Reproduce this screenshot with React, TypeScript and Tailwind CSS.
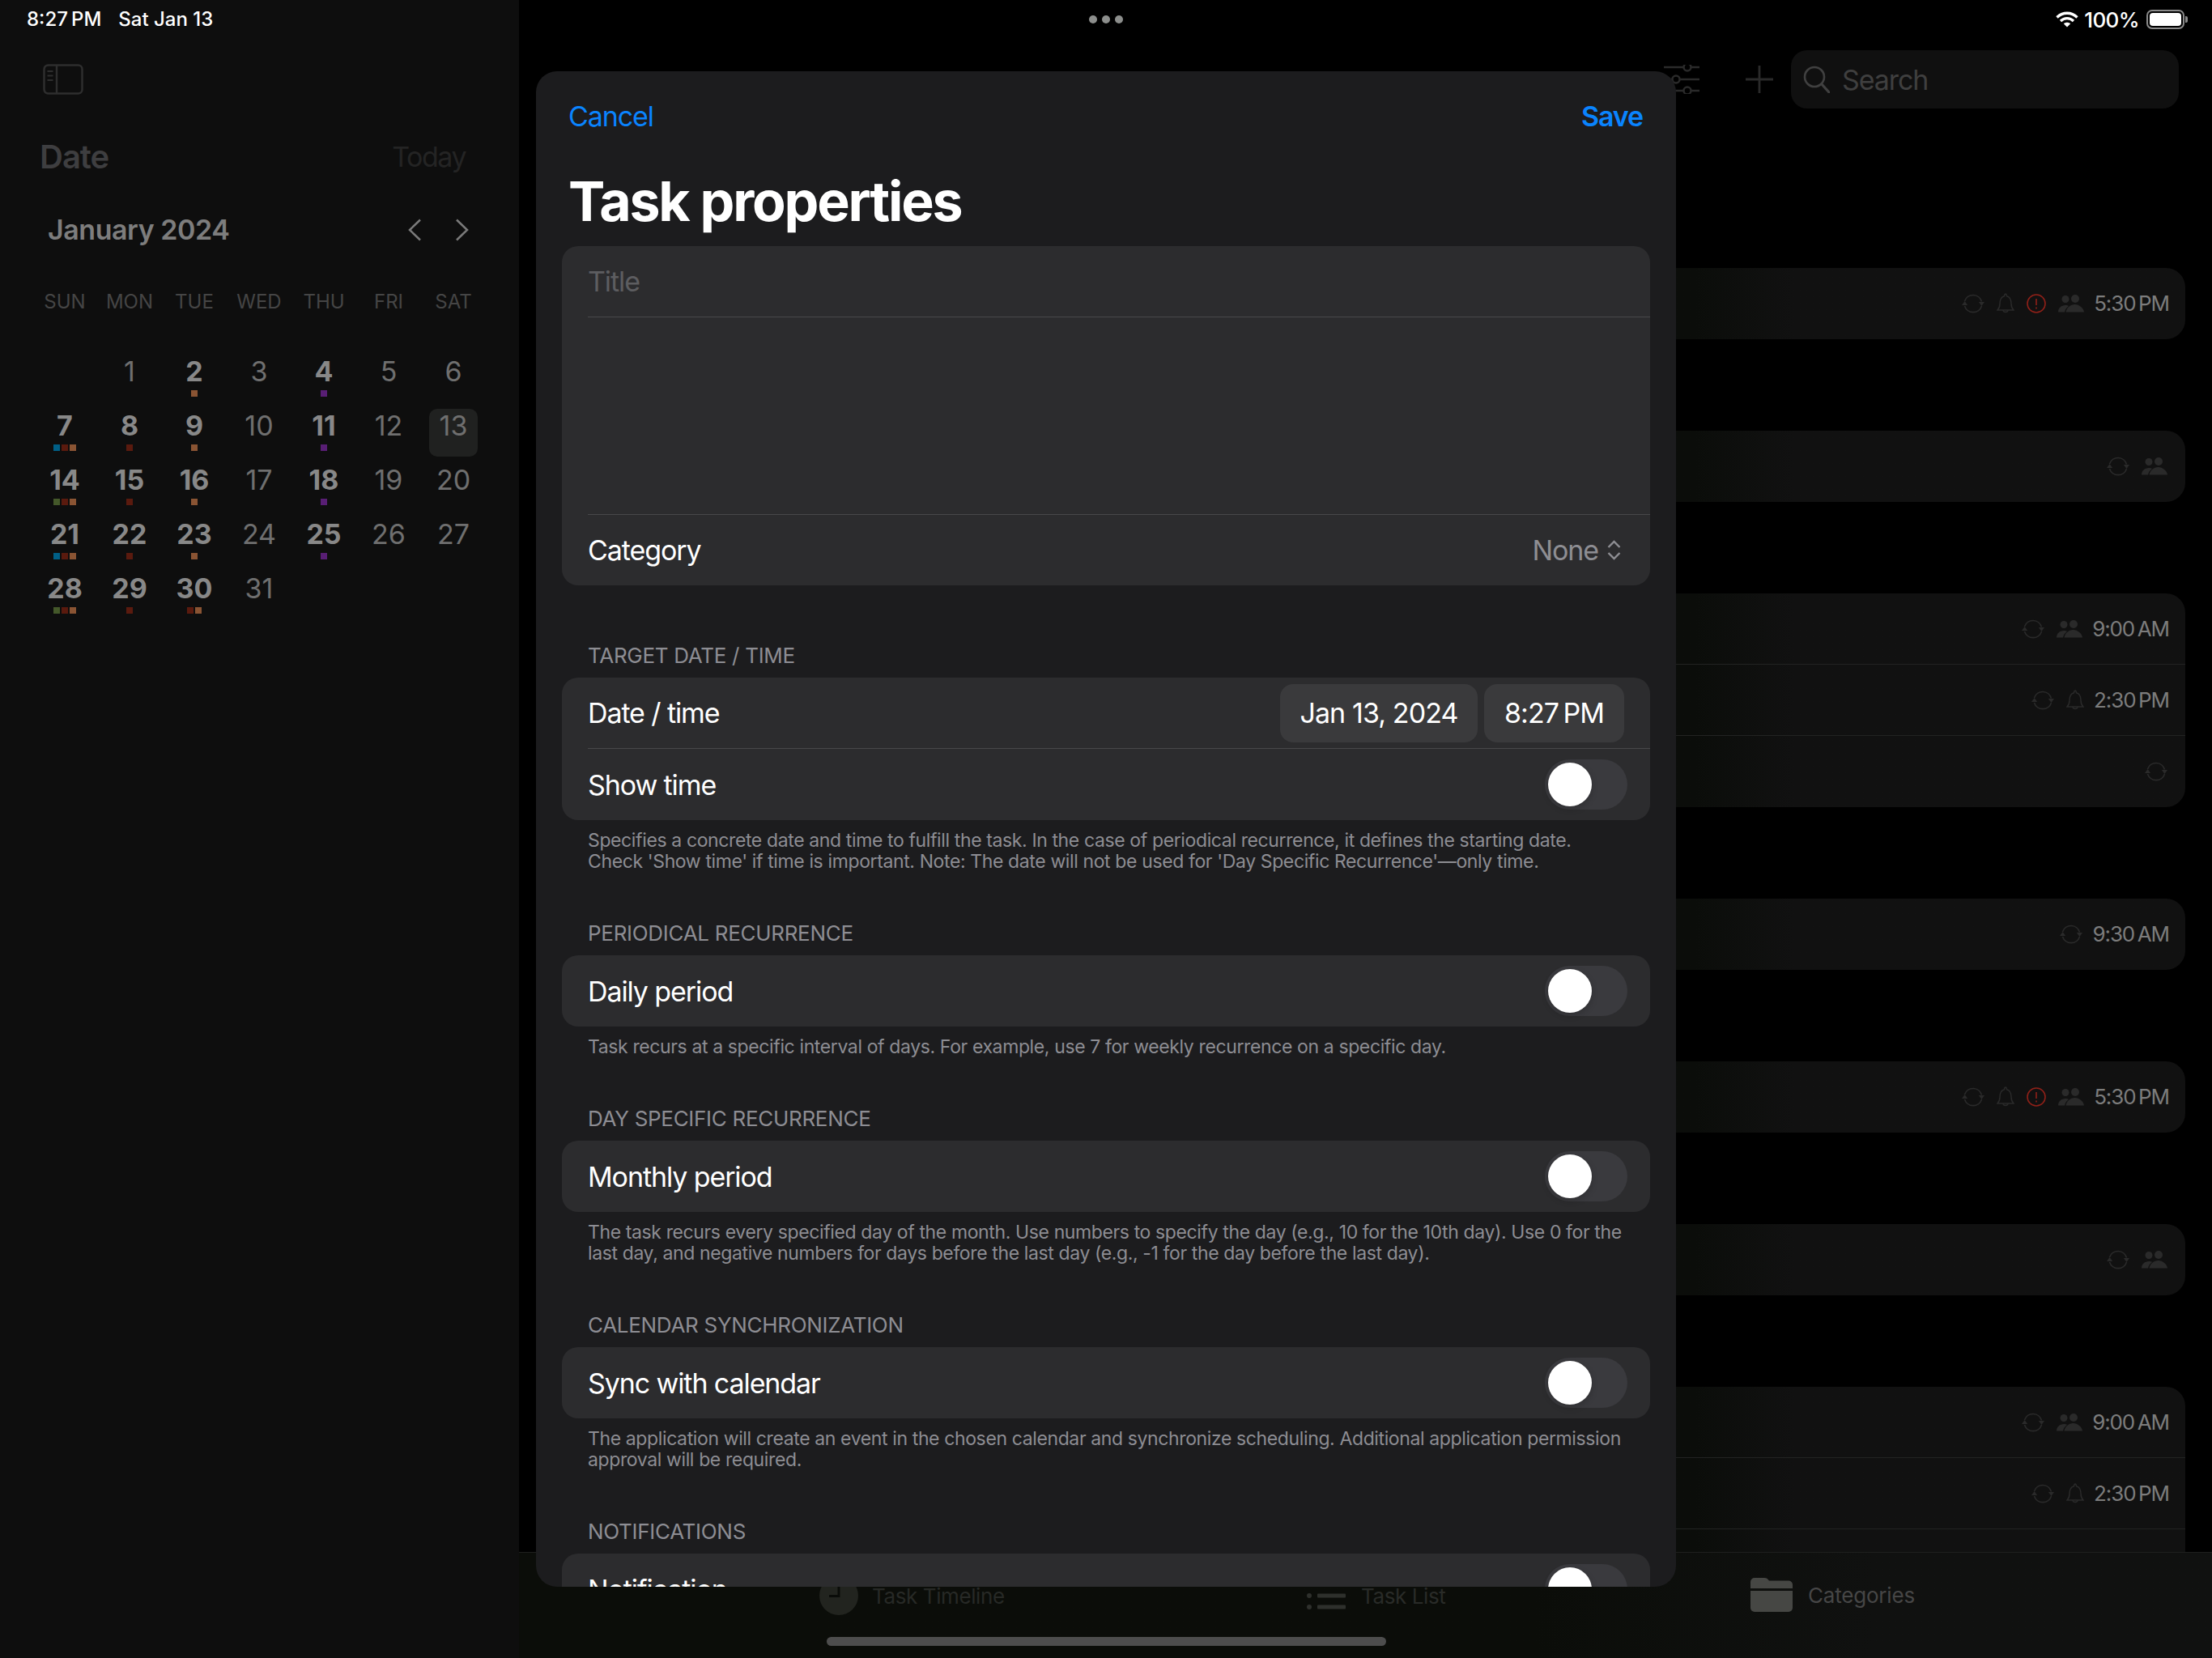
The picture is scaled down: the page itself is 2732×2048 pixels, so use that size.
import React from "react";

const NB = "\u202f";

const dotClass: Record<string, string> = {
  b: "bg-[#005f86]",
  r: "bg-[#5a1a0e]",
  o: "bg-[#8a5433]",
  p: "bg-[#581e74]",
  g: "bg-[#44582a]",
};

const dots: Record<number, string> = {
  2: "o", 4: "p", 7: "bro", 8: "r", 9: "o", 11: "p", 14: "gro", 15: "r", 16: "o", 18: "p",
  21: "bro", 22: "r", 23: "o", 25: "p", 28: "gro", 29: "r", 30: "ro",
};

function Sync() {
  return (
    <svg width="28" height="28" viewBox="0 0 28 28" fill="none" className="text-[#2a2a2a] shrink-0">
      <path d="M3.500 11A11 11 0 0 1 24.500 11.500M24.500 17A11 11 0 0 1 3.500 17" stroke="currentColor" strokeWidth="1.700" />
      <path d="M20.800 12h7.200l-3.500 5zM0 16h7.200l-3.600-5z" fill="currentColor" />
    </svg>
  );
}

function Bell() {
  return (
    <svg width="22" height="28" viewBox="0 0 22 28" fill="none" className="text-[#2a2a2a] shrink-0">
      <path
        d="M1 22c1.600-1.600 3-3.200 3-8 0-5 2.500-8.500 5.500-9.300C9.700 3.300 10.200 2 11 2s1.300 1.300 1.500 2.700C15.500 5.500 18 9 18 14c0 4.800 1.400 6.400 3 8z"
        stroke="currentColor"
        strokeWidth="1.500"
      />
      <path d="M7.800 22a3.300 3.300 0 0 0 6.400 0" stroke="currentColor" strokeWidth="1.500" />
    </svg>
  );
}

function Alert() {
  return (
    <svg width="24" height="24" viewBox="0 0 24 24" fill="none" className="text-[#8f2018] shrink-0">
      <circle cx="12" cy="12" r="11" stroke="currentColor" strokeWidth="1.600" />
      <path d="M12 6v8M12 16.500v2" stroke="currentColor" strokeWidth="1.600" />
    </svg>
  );
}

function People() {
  return (
    <svg width="32" height="22" viewBox="0 0 32 22" className="text-[#2a2a2a] shrink-0" fill="currentColor">
      <circle cx="9" cy="5.500" r="4.500" />
      <circle cx="21" cy="5" r="5" />
      <path d="M0 21.500c0-5 4-8.500 9-8.500 1.500 0 3 .4 4 1-2.500 1.800-4.500 4.500-5 7.500z" />
      <path d="M9.500 21.500c.5-5 5.500-9.500 11-9.500s11 4.500 11.500 9.500z" />
    </svg>
  );
}

function Time({ t }: { t: string }) {
  return <span className="-ml-[3px] -mr-[2px] text-[26px] leading-8 text-[#7c7c7c] tracking-[-1.100px] whitespace-nowrap">{t}</span>;
}

function Row({ children, divider }: { children?: React.ReactNode; divider?: boolean }) {
  return (
    <div className={`h-[88px] flex items-center justify-end gap-[15px] pr-[22px] ${divider ? "border-b border-[#222322]" : ""}`}>
      {children}
    </div>
  );
}

function Card({ children }: { children: React.ReactNode }) {
  return (
    <div className="rounded-[24px] overflow-hidden bg-linear-to-r from-[#0b0d0a] from-[70%] to-[#111111] to-[76%]">
      {children}
    </div>
  );
}

function RowAlert() {
  return (
    <Card>
      <Row>
        <Sync />
        <Bell />
        <Alert />
        <People />
        <Time t={`5:30${NB}PM`} />
      </Row>
    </Card>
  );
}

function RowShared() {
  return (
    <Card>
      <Row>
        <Sync />
        <People />
      </Row>
    </Card>
  );
}

function Toggle() {
  return (
    <div className="w-[102px] h-[62px] rounded-full bg-[#3a3a3e] p-[4px]">
      <div className="w-[54px] h-[54px] rounded-full bg-white shadow-[0_3px_8px_rgba(0,0,0,0.2)]" />
    </div>
  );
}

function SectionHeader({ children, first }: { children: React.ReactNode; first?: boolean }) {
  return (
    <div className={`${first ? "mt-[72px]" : "mt-[61px]"} mb-[12px] h-[30px] pl-[32px] text-[26px] leading-[30px] tracking-[-0.300px] text-[#8d8d93]`}>
      {children}
    </div>
  );
}

function Footer({ lines }: { lines: string[] }) {
  return (
    <div className="pt-[12px] pl-[32px] text-[23px] leading-[26px] tracking-[-0.380px] text-[#8d8d93]">
      {lines.map((l) => (
        <div key={l} className="whitespace-nowrap">{l}</div>
      ))}
    </div>
  );
}

function ToggleRow({ label }: { label: string }) {
  return (
    <div className="h-[88px] shrink-0 bg-[#2c2c2e] rounded-[20px] flex items-center justify-between pl-[32px] pr-[28px] text-[34px] tracking-[-1.100px] text-white">
      <span>{label}</span>
      <Toggle />
    </div>
  );
}

export default function App() {
  const cells: (number | null)[] = [null];
  for (let d = 1; d <= 31; d++) cells.push(d);
  const weekdays = ["SUN", "MON", "TUE", "WED", "THU", "FRI", "SAT"];

  return (
    <div className="relative flex w-[2732px] h-[2048px] overflow-hidden bg-black [font-family:Inter,sans-serif]">
      {/* sidebar */}
      <aside className="w-[641px] shrink-0 bg-[#0e0e0e] pt-[79px]">
        <svg width="50" height="38" viewBox="0 0 50 38" fill="none" className="ml-[53px] text-[#2e2e2e]">
          <rect x="1.500" y="1.500" width="47" height="35" rx="5" stroke="currentColor" strokeWidth="2.500" />
          <path d="M17 2v34" stroke="currentColor" strokeWidth="2.500" />
          <path d="M5.500 9h7M5.500 14.500h7M5.500 20h7" stroke="currentColor" strokeWidth="2" />
        </svg>
        <div className="mt-[53px] h-[48px] pl-[49px] pr-[66px] flex items-center justify-between">
          <span className="text-[40px] leading-[48px] font-semibold tracking-[-1px] text-[#3e3e40]">Date</span>
          <span className="text-[34px] leading-[48px] tracking-[-1.500px] text-[#242424]">Today</span>
        </div>
        <div className="mt-[44px] h-[44px] pl-[59px] pr-[62px] flex items-center justify-between">
          <span className="text-[34px] leading-[44px] font-semibold tracking-[-0.450px] text-[#7d7d7d]">January 2024</span>
          <div className="flex items-center gap-[43px] text-[#7a7a7a]">
            <svg width="16" height="28" viewBox="0 0 16 28" fill="none">
              <path d="M15 1.500 2 14l13 12.500" stroke="currentColor" strokeWidth="2.500" />
            </svg>
            <svg width="16" height="28" viewBox="0 0 16 28" fill="none">
              <path d="M1 1.500 14 14 1 26.500" stroke="currentColor" strokeWidth="2.500" />
            </svg>
          </div>
        </div>
        <div className="mt-[52px] h-[30px] pl-[40px] grid grid-cols-[repeat(7,80px)] text-[24px] leading-[30px] text-[#454545] text-center">
          {weekdays.map((w) => (
            <span key={w}>{w}</span>
          ))}
        </div>
        <div className="mt-[50px] pl-[40px] grid grid-cols-[repeat(7,80px)] auto-rows-[67px]">
          {cells.map((d, i) => {
            const ds = d ? dots[d] : undefined;
            return (
              <div key={i} className={`w-[60px] h-[59px] mx-auto rounded-[10px] flex flex-col items-center pt-[1px] ${d === 13 ? "bg-[#202120]" : ""}`}>
                {d ? (
                  <>
                    <span className={`h-[40px] text-[34px] leading-[40px] ${ds ? "font-bold text-[#888888]" : "text-[#6f6f6f]"}`}>{d}</span>
                    {ds ? (
                      <div className="mt-[3px] flex gap-[2px]">
                        {ds.split("").map((c, j) => (
                          <span key={j} className={`w-[8px] h-[8px] ${dotClass[c]}`} />
                        ))}
                      </div>
                    ) : null}
                  </>
                ) : null}
              </div>
            );
          })}
        </div>
      </aside>

      {/* main */}
      <main className="flex-1 min-w-0">
        <div className="pt-[62px] pr-[41px] flex justify-end items-center">
          <svg width="44" height="36" viewBox="0 0 44 36" fill="none" className="text-[#2a2a2a] mr-[57px]">
            <path d="M0 3h24M34 3h10M0 18h10M20 18h24M0 32h24M34 32h10" stroke="currentColor" strokeWidth="2.500" />
            <circle cx="29" cy="3" r="4.500" stroke="currentColor" strokeWidth="2.500" />
            <circle cx="15" cy="18" r="4.500" stroke="currentColor" strokeWidth="2.500" />
            <circle cx="29" cy="32" r="4.500" stroke="currentColor" strokeWidth="2.500" />
          </svg>
          <svg width="34" height="34" viewBox="0 0 34 34" fill="none" className="text-[#2a2a2a] mr-[22px]">
            <path d="M17 0v34M0 17h34" stroke="currentColor" strokeWidth="2.800" />
          </svg>
          <div className="w-[479px] h-[72px] rounded-[20px] bg-[#101010] flex items-center pl-[15px] gap-[15px]">
            <svg width="33" height="34" viewBox="0 0 33 34" fill="none" className="text-[#404040]">
              <circle cx="14" cy="14" r="12" stroke="currentColor" strokeWidth="2.600" />
              <path d="M23 23 32 33" stroke="currentColor" strokeWidth="3.200" strokeLinecap="round" />
            </svg>
            <span className="text-[34px] tracking-[-1.100px] text-[#3f3f3f]">Search</span>
          </div>
        </div>

        <div className="mt-[197px] pl-[39px] pr-[33px] flex flex-col gap-[113px]">
          <RowAlert />
          <RowShared />
          <Card>
            <Row divider>
              <Sync />
              <People />
              <Time t={`9:00${NB}AM`} />
            </Row>
            <Row divider>
              <Sync />
              <Bell />
              <Time t={`2:30${NB}PM`} />
            </Row>
            <Row>
              <Sync />
            </Row>
          </Card>
          <Card>
            <Row>
              <Sync />
              <Time t={`9:30${NB}AM`} />
            </Row>
          </Card>
          <RowAlert />
          <RowShared />
          <Card>
            <Row divider>
              <Sync />
              <People />
              <Time t={`9:00${NB}AM`} />
            </Row>
            <Row divider>
              <Sync />
              <Bell />
              <Time t={`2:30${NB}PM`} />
            </Row>
            <Row />
          </Card>
        </div>
      </main>

      {/* tab bar */}
      <div className="absolute left-[641px] right-0 bottom-0 h-[131px] border-t border-[#1e1f1e] bg-linear-to-r from-[#0b0d09] from-[60%] to-[#101110] to-[80%] pl-[371px] flex items-start pt-[29px] text-[26px] tracking-[-0.400px]">
        <div className="flex items-center gap-[17px] w-[602px]">
          <svg width="48" height="48" viewBox="0 0 48 48">
            <circle cx="24" cy="24" r="24" fill="#22241f" />
            <path d="M24 9v15.500H12" fill="none" stroke="#0a0c09" strokeWidth="3" />
          </svg>
          <span className="text-[#272926]">Task Timeline</span>
        </div>
        <div className="flex items-center gap-[19px] w-[546px]">
          <svg width="48" height="48" viewBox="0 0 48 48" fill="#2e302c">
            <circle cx="3" cy="10" r="3" />
            <circle cx="3" cy="24" r="3" />
            <circle cx="3" cy="38" r="3" />
            <rect x="13" y="7.500" width="35" height="5" rx="1" />
            <rect x="13" y="21.500" width="35" height="5" rx="1" />
            <rect x="13" y="35.500" width="35" height="5" rx="1" />
          </svg>
          <span className="text-[#292b28]">Task List</span>
        </div>
        <div className="flex items-center gap-[19px] mt-[2px] ml-[2px] tracking-[-0.200px]">
          <svg width="52" height="42" viewBox="0 0 52 42" fill="#464744">
            <path d="M0 5a5 5 0 0 1 5-5h12c3 0 4 1 6 3.500h24a5 5 0 0 1 5 5V13H0z" />
            <path d="M0 16h52v21a5 5 0 0 1-5 5H5a5 5 0 0 1-5-5z" />
          </svg>
          <span className="text-[#464646]">Categories</span>
        </div>
      </div>

      {/* home indicator */}
      <div className="absolute left-[1021px] top-[2022px] w-[691px] h-[11px] rounded-full bg-[#4d4d4d]" />

      {/* status bar */}
      <div className="absolute left-0 right-0 top-0 h-[48px] flex items-center justify-between pl-[33px] pr-[30px] text-white">
        <div className="flex items-center gap-[21px] text-[24px] font-medium">
          <span>{`8:27${NB}PM`}</span>
          <span>Sat Jan 13</span>
        </div>
        <div className="absolute left-[1345px] flex gap-[6px]">
          <span className="w-[10px] h-[10px] rounded-full bg-[#8c8e8c]" />
          <span className="w-[10px] h-[10px] rounded-full bg-[#8c8e8c]" />
          <span className="w-[10px] h-[10px] rounded-full bg-[#8c8e8c]" />
        </div>
        <div className="flex items-center text-[26px] font-medium tracking-[-0.600px]">
          <svg width="28" height="20" viewBox="0 0 28 20" fill="none" stroke="white" strokeWidth="3.300" className="mr-[7px]">
            <path d="M1.500 7.500C8.500.500 19.500.500 26.500 7.500" />
            <path d="M6 12c4.500-4.500 11.500-4.500 16 0" />
            <path d="M14 19.500 9.800 15.300c2.500-2 5.900-2 8.400 0z" fill="white" stroke="none" />
          </svg>
          <span className="mr-[9px]">100%</span>
          <div className="w-[47px] h-[24px] rounded-[7px] border-2 border-[#8a8a8a] p-[2px]">
            <div className="w-full h-full rounded-[4px] bg-white" />
          </div>
          <div className="ml-[1px] w-[3px] h-[8px] rounded-r-[2px] bg-[#8a8a8a]" />
        </div>
      </div>

      {/* modal */}
      <div className="absolute left-[662px] top-[88px] w-[1408px] h-[1872px] rounded-[26px] bg-[#1c1c1e] overflow-hidden px-[32px] flex flex-col">
        <div className="mt-[35px] h-[40px] pl-[8px] pr-[9px] flex items-center justify-between text-[34px] tracking-[-1.100px] text-[#0a84ff] shrink-0">
          <span>Cancel</span>
          <span className="font-semibold">Save</span>
        </div>
        <div className="mt-[45px] h-[80px] pl-[8px] text-[68px] leading-[80px] font-bold text-white shrink-0 tracking-[-2.200px]">Task properties</div>
        <div className="mt-[16px] bg-[#2c2c2e] rounded-[20px] shrink-0 text-[34px] tracking-[-1.100px]">
          <div className="ml-[32px] h-[88px] border-b border-[#48484a] flex items-center text-[#5d5d60]">Title</div>
          <div className="ml-[32px] h-[244px] border-b border-[#48484a]" />
          <div className="h-[87px] pl-[32px] pr-[36px] flex items-center justify-between">
            <span className="text-white">Category</span>
            <span className="flex items-center gap-[11px] text-[#8e8e93]">
              None
              <svg width="17" height="25" viewBox="0 0 17 25" fill="none" stroke="currentColor" strokeWidth="2.400">
                <path d="M1.500 9 8.500 2l7 7M1.500 16l7 7 7-7" />
              </svg>
            </span>
          </div>
        </div>

        <SectionHeader first>TARGET DATE / TIME</SectionHeader>
        <div className="bg-[#2c2c2e] rounded-[20px] shrink-0 text-[34px] tracking-[-1.100px] text-white">
          <div className="ml-[32px] h-[88px] border-b border-[#48484a] flex items-center justify-between pr-[32px]">
            <span>Date / time</span>
            <div className="flex gap-[8px] tracking-[-0.900px]">
              <span className="h-[72px] w-[244px] rounded-[16px] bg-[#3a3a3c] flex items-center justify-center">Jan 13, 2024</span>
              <span className="h-[72px] w-[173px] rounded-[16px] bg-[#3a3a3c] flex items-center justify-center">{`8:27${NB}PM`}</span>
            </div>
          </div>
          <div className="h-[88px] pl-[32px] pr-[28px] flex items-center justify-between">
            <span>Show time</span>
            <Toggle />
          </div>
        </div>
        <Footer
          lines={[
            "Specifies a concrete date and time to fulfill the task. In the case of periodical recurrence, it defines the starting date.",
            "Check 'Show time' if time is important. Note: The date will not be used for 'Day Specific Recurrence'—only time.",
          ]}
        />

        <SectionHeader>PERIODICAL RECURRENCE</SectionHeader>
        <ToggleRow label="Daily period" />
        <Footer lines={["Task recurs at a specific interval of days. For example, use 7 for weekly recurrence on a specific day."]} />

        <SectionHeader>DAY SPECIFIC RECURRENCE</SectionHeader>
        <ToggleRow label="Monthly period" />
        <Footer
          lines={[
            "The task recurs every specified day of the month. Use numbers to specify the day (e.g., 10 for the 10th day). Use 0 for the",
            "last day, and negative numbers for days before the last day (e.g., -1 for the day before the last day).",
          ]}
        />

        <SectionHeader>CALENDAR SYNCHRONIZATION</SectionHeader>
        <ToggleRow label="Sync with calendar" />
        <Footer
          lines={[
            "The application will create an event in the chosen calendar and synchronize scheduling. Additional application permission",
            "approval will be required.",
          ]}
        />

        <SectionHeader>NOTIFICATIONS</SectionHeader>
        <ToggleRow label="Notification" />
      </div>
    </div>
  );
}
